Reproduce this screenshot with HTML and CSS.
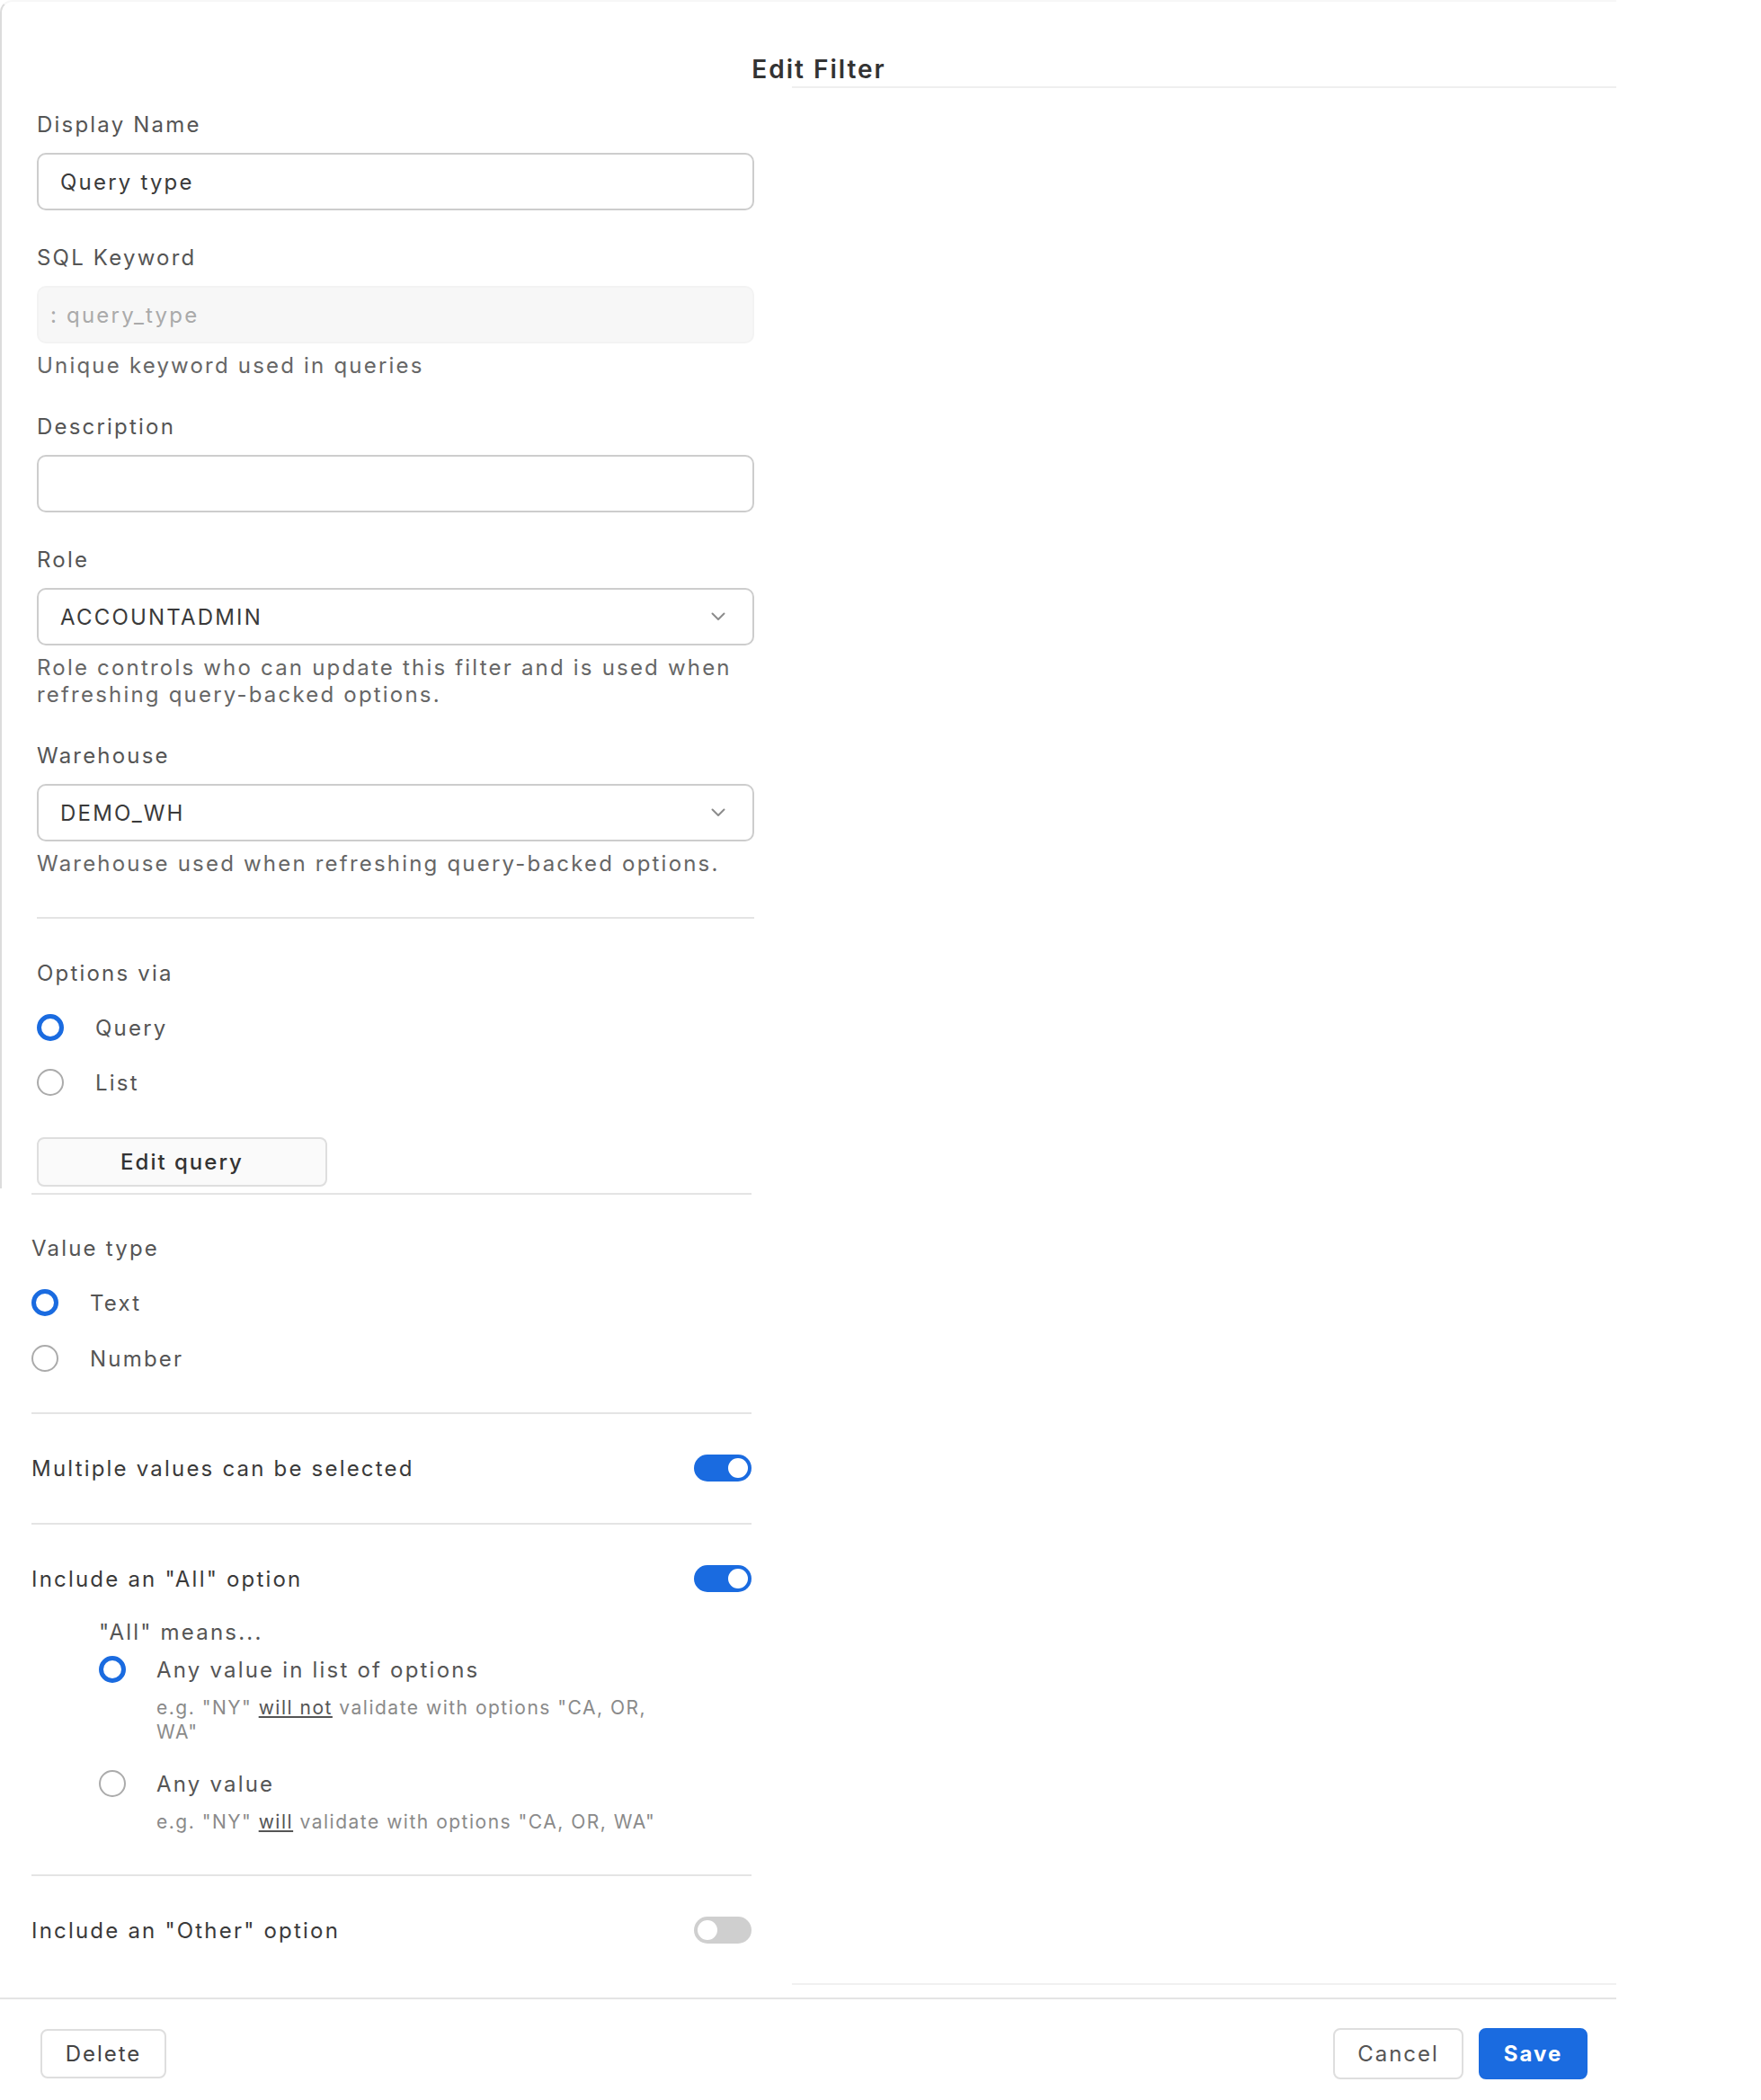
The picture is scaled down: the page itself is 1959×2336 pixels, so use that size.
FILE: index.html
```html
<!DOCTYPE html>
<html lang="en">
<head>
    <meta charset="UTF-8">
    <meta name="viewport" content="width=device-width, initial-scale=1.0">
    <title>Edit Filter</title>
    <link rel="stylesheet" href="styles.css">
</head>
<body>
    <div class="modal">
        <div class="upper">
            <header class="modal-head">
                <h1 class="modal-title">Edit Filter</h1>
                <div class="head-rule"></div>
            </header>

            <div class="form">
                <div class="field">
                    <label class="field-label">Display Name</label>
                    <div class="input">Query type</div>
                </div>

                <div class="field">
                    <label class="field-label">SQL Keyword</label>
                    <div class="input disabled">:&nbsp;query_type</div>
                    <p class="help">Unique keyword used in queries</p>
                </div>

                <div class="field">
                    <label class="field-label">Description</label>
                    <div class="input"></div>
                </div>

                <div class="field">
                    <label class="field-label">Role</label>
                    <div class="input select">
                        <span>ACCOUNTADMIN</span>
                        <svg class="chevron" viewBox="0 0 16 10" width="16" height="10"><path d="M1.5 1.5 L8 8 L14.5 1.5" fill="none" stroke="#8c8c8c" stroke-width="2" stroke-linecap="round" stroke-linejoin="round"/></svg>
                    </div>
                    <p class="help">Role controls who can update this filter and is used when refreshing query-backed options.</p>
                </div>

                <div class="field">
                    <label class="field-label">Warehouse</label>
                    <div class="input select">
                        <span>DEMO_WH</span>
                        <svg class="chevron" viewBox="0 0 16 10" width="16" height="10"><path d="M1.5 1.5 L8 8 L14.5 1.5" fill="none" stroke="#8c8c8c" stroke-width="2" stroke-linecap="round" stroke-linejoin="round"/></svg>
                    </div>
                    <p class="help">Warehouse used when refreshing query-backed options.</p>
                </div>

                <div class="divider form-divider"></div>

                <div class="group options-group">
                    <div class="group-label">Options via</div>
                    <div class="radio-row"><span class="radio on"></span><span>Query</span></div>
                    <div class="radio-row"><span class="radio"></span><span>List</span></div>
                    <button class="btn edit-query">Edit query</button>
                </div>
            </div>
        </div>

        <div class="lower">
            <div class="divider first"></div>

            <div class="group value-group">
                <div class="group-label">Value type</div>
                <div class="radio-row"><span class="radio on"></span><span>Text</span></div>
                <div class="radio-row"><span class="radio"></span><span>Number</span></div>
            </div>

            <div class="divider"></div>

            <div class="toggle-row">
                <span>Multiple values can be selected</span>
                <span class="toggle on"></span>
            </div>

            <div class="divider"></div>

            <div class="toggle-row">
                <span>Include an "All" option</span>
                <span class="toggle on"></span>
            </div>

            <div class="all-means">
                <div class="sub-label">"All" means...</div>
                <div class="radio-row"><span class="radio on"></span><span>Any value in list of options</span></div>
                <p class="sub-help">e.g. "NY" <u>will not</u> validate with options "CA, OR, WA"</p>
                <div class="radio-row"><span class="radio"></span><span>Any value</span></div>
                <p class="sub-help">e.g. "NY" <u>will</u> validate with options "CA, OR, WA"</p>
            </div>

            <div class="divider"></div>

            <div class="toggle-row">
                <span>Include an "Other" option</span>
                <span class="toggle"></span>
            </div>
        </div>

        <div class="foot-rule"></div>

        <footer class="modal-foot">
            <button class="btn delete">Delete</button>
            <div class="foot-actions">
                <button class="btn cancel">Cancel</button>
                <button class="btn save">Save</button>
            </div>
        </footer>
    </div>
</body>
</html>
```

FILE: styles.css
```css
body {
    margin: 0;
    background-color: white;
    font-family: Inter, "Open Sans", sans-serif;
    font-size: 24px;
    letter-spacing: 2.2px;
    color: #444;
}
.modal {
    width: 1798px;
}
.upper {
    border-left: 2px solid #dcdcdc;
    border-top: 2px solid #f7f7f7;
    border-top-left-radius: 14px;
    padding-bottom: 2px;
}
.modal-head {
    padding-top: 57px;
}
.modal-title {
    margin: 0;
    padding-left: 22px;
    text-align: center;
    font-size: 28px;
    line-height: 36px;
    font-weight: 600;
    letter-spacing: 2px;
    color: #333;
}
.head-rule {
    margin: 1px 0 0 879px;
    height: 2px;
    background-color: #efefef;
}
.form {
    width: 798px;
    padding: 26px 0 0 39px;
}
.field + .field {
    margin-top: 38px;
}
.field-label {
    display: block;
    line-height: 30px;
    margin-bottom: 16px;
    color: #555;
}
.input {
    box-sizing: border-box;
    height: 64px;
    padding: 0 24px;
    border: 2px solid #cdcdcd;
    border-radius: 10px;
    display: flex;
    align-items: center;
    color: #3a3a3a;
}
.input.disabled {
    background-color: #f7f7f7;
    border-color: #f3f3f3;
    color: #aaa;
    padding-left: 13px;
}
.select {
    justify-content: space-between;
}
.chevron {
    margin-right: 6px;
}
.help {
    margin: 10px 0 0;
    line-height: 30px;
    color: #666;
}
.divider {
    height: 2px;
    background-color: #e4e4e4;
    margin-top: 44px;
}
.group {
    margin-top: 46px;
}
.group-label {
    line-height: 30px;
    color: #555;
    margin-bottom: 30px;
}
.radio-row {
    display: flex;
    align-items: center;
    height: 30px;
    gap: 35px;
    color: #555;
}
.radio-row + .radio-row {
    margin-top: 31px;
}
.radio {
    box-sizing: border-box;
    width: 30px;
    height: 30px;
    border: 2px solid #ababab;
    border-radius: 50%;
    flex: none;
}
.radio.on {
    border: 5px solid #1a6be0;
}
.btn {
    font-family: inherit;
    font-size: 24px;
    letter-spacing: 2px;
    line-height: 30px;
    box-sizing: border-box;
    border: 2px solid #dedede;
    border-radius: 8px;
    background-color: #fafafa;
    color: #444;
    cursor: pointer;
}
.edit-query {
    margin-top: 46px;
    width: 323px;
    height: 55px;
    font-weight: 500;
    color: #333;
}
.lower {
    width: 801px;
    padding-left: 35px;
}
.divider.first {
    margin-top: 5px;
}
.value-group {
    margin-top: 45px;
}
.value-group .radio-row + .radio-row {
    margin-top: 32px;
}
.toggle-row {
    display: flex;
    justify-content: space-between;
    align-items: center;
    height: 30px;
    margin-top: 45px;
    color: #3a3a3a;
}
.divider + .toggle-row,
.group + .divider,
.all-means + .divider {
    margin-top: 45px;
}
.toggle-row + .divider {
    margin-top: 46px;
}
.toggle {
    position: relative;
    width: 64px;
    height: 30px;
    border-radius: 15px;
    background-color: #cfcfcf;
    flex: none;
}
.toggle::after {
    content: "";
    position: absolute;
    top: 4px;
    left: 4px;
    width: 22px;
    height: 22px;
    border-radius: 50%;
    background-color: white;
}
.toggle.on {
    background-color: #1a6be0;
}
.toggle.on::after {
    left: 38px;
}
.all-means {
    padding-left: 75px;
    margin-top: 30px;
}
.sub-label {
    line-height: 30px;
    color: #555;
    margin-bottom: 11px;
}
.all-means .radio-row {
    gap: 34px;
}
.sub-help {
    margin: 14px 0 0 64px;
    width: 570px;
    font-size: 21px;
    line-height: 27px;
    letter-spacing: 1.5px;
    color: #8a8a8a;
}
.sub-help u {
    color: #555;
}
.sub-help + .radio-row {
    margin-top: 29px;
}
.foot-rule {
    margin: 44px 0 0 881px;
    height: 2px;
    background-color: #f0f0f0;
}
.modal-foot {
    margin-top: 14px;
    border-top: 2px solid #e4e4e4;
    padding: 32px 32px 22px 45px;
    display: flex;
    justify-content: space-between;
    align-items: center;
}
.delete {
    width: 140px;
    height: 55px;
    background-color: white;
}
.foot-actions {
    display: flex;
    gap: 17px;
}
.cancel {
    width: 145px;
    height: 57px;
    background-color: white;
    color: #555;
}
.save {
    width: 121px;
    height: 57px;
    border-color: #1a6be0;
    background-color: #1a6be0;
    color: white;
    font-weight: 700;
}
```
